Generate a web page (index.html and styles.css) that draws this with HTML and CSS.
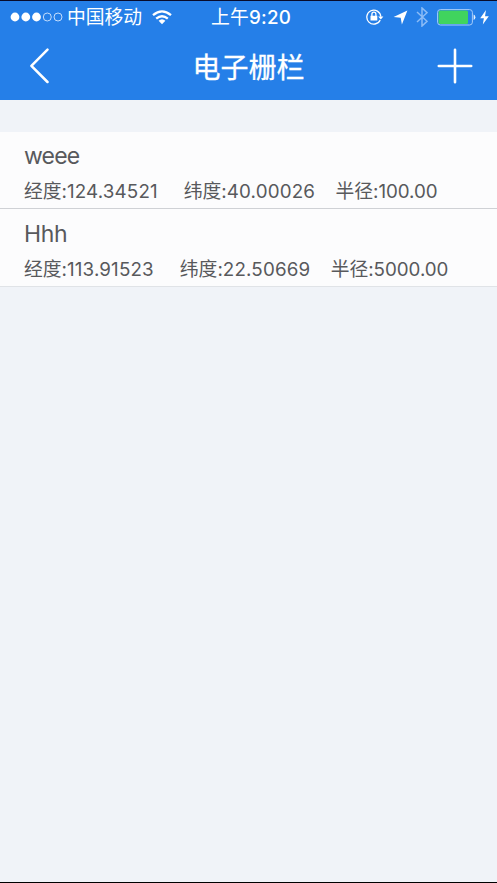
FILE: index.html
```
<!DOCTYPE html>
<html lang="zh-CN">
<head>
<meta charset="utf-8">
<title>电子栅栏</title>
<link rel="stylesheet" href="styles.css">
</head>
<body>
<div class="screen">
  <header class="header">
    <div class="status">
      <div class="status-left">
        <svg class="signal" width="53" height="10" viewBox="0 0 53 10"><g fill="#fff"><circle cx="5" cy="5" r="4.4"/><circle cx="15.8" cy="5" r="4.4"/><circle cx="26.5" cy="5" r="4.4"/></g><g fill="none" stroke="#c4ddfb" stroke-width="1"><circle cx="37.3" cy="5" r="4"/><circle cx="48" cy="5" r="4"/></g></svg>
        <span class="carrier">中国移动</span>
        <svg class="wifi" width="20" height="15" viewBox="0 0 20 15"><g fill="none" stroke="#fff" stroke-width="2.3"><path d="M1 5.2Q10-2.5 19 5.2"/><path d="M4.2 8.7Q10 3.7 15.8 8.7"/></g><path d="M6.6 10.8Q10 7.8 13.4 10.8L10 14.2Z" fill="#fff"/></svg>
      </div>
      <span class="clock">上午<b>9:20</b></span>
      <div class="status-right">
        <svg width="18" height="16" viewBox="0 0 18 16"><g fill="none" stroke="#fff" stroke-width="1.3"><path d="M14.2 11A7 7 0 1 1 14.8 7.6"/><path d="M5.9 7V5.2a2 2 0 0 1 4 0V7"/></g><path d="M4.5 6.8h6.8v4.6H4.5zM12.2 7.4h5.2L14.8 10.4z" fill="#fff"/></svg>
        <svg class="location" width="15" height="15" viewBox="0 0 15 15"><path d="M14.4.6L8.9 14.4 7.7 7.8.6 6.9Z" fill="#fff"/></svg>
        <svg class="bluetooth" width="12" height="20" viewBox="0 0 12 20"><path d="M1 5L11 14.3 6 19V1L11 5.7 1 15" fill="none" stroke="#8cbcf6" stroke-width="1.5"/></svg>
        <svg class="battery" width="39" height="17" viewBox="0 0 39 17"><rect x=".6" y=".6" width="34.8" height="15.4" rx="2.8" fill="none" stroke="#a8cdf9"/><rect x="1.6" y="1.6" width="29.4" height="13.4" rx="1.5" fill="#40d45e"/><path d="M36.6 5.6Q38.4 6 38.4 8.3T36.6 11Z" fill="#e4f0fd"/></svg>
        <svg class="bolt" width="9" height="15" viewBox="0 0 9 15"><path d="M6 0L.2 8.2H3.9L2.8 14.6 8.8 6.3H5Z" fill="#fff"/></svg>
      </div>
    </div>
    <nav class="navbar">
      <svg class="back" width="20" height="36" viewBox="0 0 20 36"><path d="M17.5 1.6L1.4 17.8 17.5 34" fill="none" stroke="#fff" stroke-width="2.5" stroke-linecap="round" stroke-linejoin="round"/></svg>
      <h1 class="title">电子栅栏</h1>
      <svg class="add" width="36" height="36" viewBox="0 0 36 36"><path d="M1.8 18H34.2M18 1.8V34.2" fill="none" stroke="#fff" stroke-width="2.6" stroke-linecap="round"/></svg>
    </nav>
  </header>
  <main class="list">
    <section class="fence">
      <h2 class="name">weee</h2>
      <div class="details"><span>经度:<b>124.34521</b></span><span>纬度:<b>40.00026</b></span><span class="radius">半径:100.00</span></div>
    </section>
    <section class="fence">
      <h2 class="name">Hhh</h2>
      <div class="details"><span>经度:<b>113.91523</b></span><span>纬度:<b>22.50669</b></span><span class="radius">半径:5000.00</span></div>
    </section>
  </main>
</div>
</body>
</html>
```
FILE: styles.css
```
* { box-sizing: border-box; }
body { margin: 0; font-family: Inter, "Noto Sans CJK SC", sans-serif; background: #f0f3f8; }
svg { display: block; flex: none; }
.screen { height: 883px; border-top: 1px solid #080b2b; border-bottom: 1px solid #000; overflow: hidden; }
.header { height: 99px; background: #257fe8; color: #fff; }
.status { height: 32px; display: grid; grid-template-columns: 1fr auto 1fr; align-items: center; padding: 0 8px 0 10px; }
.status-left, .status-right { display: flex; align-items: center; }
.status-right { justify-content: flex-end; }
.carrier { margin-left: 4px; padding-top: 2px; font-size: 18.8px; line-height: 30px; }
.wifi { margin-left: 10px; }
.clock { margin-left: 3px; padding-top: 2px; font-size: 18.8px; line-height: 30px; letter-spacing: .2px; }
.clock b { font-weight: 500; }
.location { margin-left: 9px; }
.bluetooth { margin-left: 8px; }
.battery { margin-left: 9px; }
.bolt { margin-left: 4px; }
.navbar { height: 67px; display: grid; grid-template-columns: 1fr auto 1fr; align-items: center; padding: 0 24px 1px 30px; }
.title { margin: 0 6px 0 0; padding-top: 3px; font-size: 28px; line-height: 40px; font-weight: 400; -webkit-text-stroke: .3px #fff; }
.add { justify-self: end; }
.list { margin-top: 32px; }
.fence { height: 77px; padding: 9px 24px 0; background: #fcfcfd; border-bottom: 1px solid #cfd1d5; color: #58595c; }
.fence + .fence { height: 78px; padding-top: 10px; border-color: #e0e3e7; }
.name { margin: 0; font-size: 23px; line-height: 31px; font-weight: 400; letter-spacing: -.8px; }
.fence + .fence .name { letter-spacing: -.4px; }
.details { display: flex; gap: 26px; margin-top: 6px; font-size: 18.8px; line-height: 28px; white-space: nowrap; }
.details b { font-weight: 400; letter-spacing: .15px; }
.radius { margin-left: -5.5px; letter-spacing: -.05px; }
```
